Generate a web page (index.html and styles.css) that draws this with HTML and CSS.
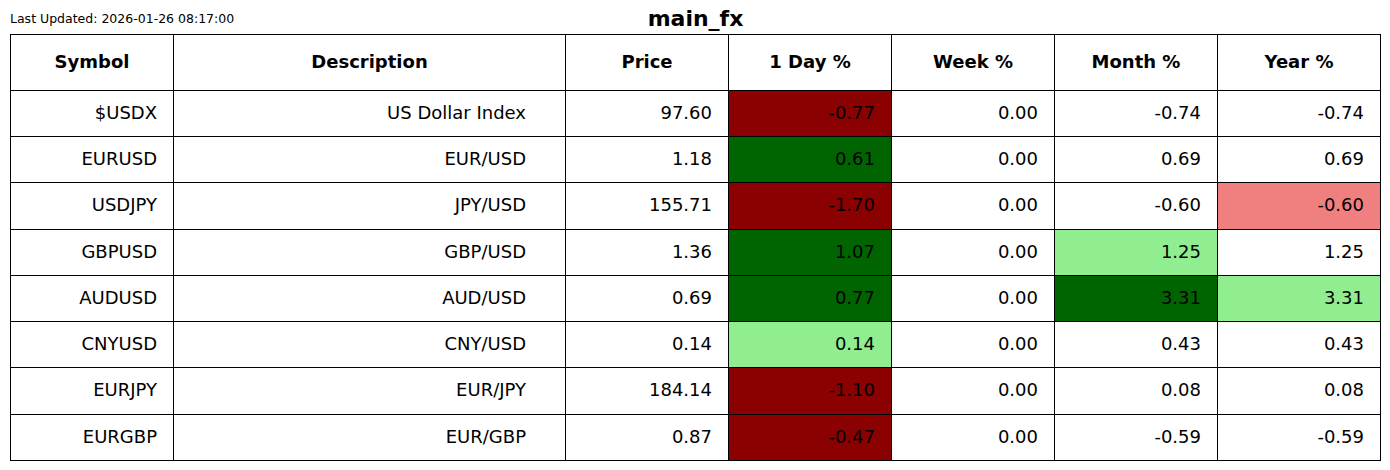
FILE: index.html
```html
<!DOCTYPE html>
<html>
<head>
<meta charset="utf-8">
<link rel="stylesheet" href="styles.css">
</head>
<body>
<div class="page">
  <div class="top">
    <div class="updated">Last Updated: 2026-01-26 08:17:00</div>
    <div class="title">main_fx</div>
    <div></div>
  </div>
  <table class="fx">
    <colgroup>
      <col class="c-narrow"><col class="c-wide"><col class="c-narrow"><col class="c-narrow"><col class="c-narrow"><col class="c-narrow"><col class="c-narrow">
    </colgroup>
    <thead>
      <tr><th>Symbol</th><th>Description</th><th>Price</th><th>1 Day %</th><th>Week %</th><th>Month %</th><th>Year %</th></tr>
    </thead>
    <tbody>
      <tr class="r46"><td>$USDX</td><td class="desc">US Dollar Index</td><td>97.60</td><td class="dred">-0.77</td><td>0.00</td><td>-0.74</td><td>-0.74</td></tr>
      <tr class="r46"><td>EURUSD</td><td class="desc">EUR/USD</td><td>1.18</td><td class="dgreen">0.61</td><td>0.00</td><td>0.69</td><td>0.69</td></tr>
      <tr class="r47"><td>USDJPY</td><td class="desc">JPY/USD</td><td>155.71</td><td class="dred">-1.70</td><td>0.00</td><td>-0.60</td><td class="lred">-0.60</td></tr>
      <tr class="r46"><td>GBPUSD</td><td class="desc">GBP/USD</td><td>1.36</td><td class="dgreen">1.07</td><td>0.00</td><td class="lgreen">1.25</td><td>1.25</td></tr>
      <tr class="r46"><td>AUDUSD</td><td class="desc">AUD/USD</td><td>0.69</td><td class="dgreen">0.77</td><td>0.00</td><td class="dgreen">3.31</td><td class="lgreen">3.31</td></tr>
      <tr class="r46"><td>CNYUSD</td><td class="desc">CNY/USD</td><td>0.14</td><td class="lgreen">0.14</td><td>0.00</td><td>0.43</td><td>0.43</td></tr>
      <tr class="r47"><td>EURJPY</td><td class="desc">EUR/JPY</td><td>184.14</td><td class="dred">-1.10</td><td>0.00</td><td>0.08</td><td>0.08</td></tr>
      <tr class="r46"><td>EURGBP</td><td class="desc">EUR/GBP</td><td>0.87</td><td class="dred">-0.47</td><td>0.00</td><td>-0.59</td><td>-0.59</td></tr>
    </tbody>
  </table>
</div>
</body>
</html>
```
FILE: styles.css
```css
html, body {
  margin: 0;
  padding: 0;
  background: #ffffff;
}
body {
  font-family: "DejaVu Sans", sans-serif;
  color: #000;
}
.page {
  padding: 0 9px 0 10px;
  width: 1371px;
}
.top {
  display: grid;
  grid-template-columns: 1fr auto 1fr;
  align-items: center;
  height: 34px;
}
.updated {
  font-size: 12.5px;
  line-height: 14px;
  margin-top: 4px;
}
.title {
  font-size: 22px;
  font-weight: bold;
  line-height: 26px;
  margin-top: 4px;
}
.fx {
  border-collapse: collapse;
  table-layout: fixed;
  width: 1371px;
  font-size: 18px;
}
.c-narrow { width: 163px; }
.c-wide { width: 392px; }
.fx th, .fx td {
  border: 1px solid #000;
  padding: 0 16px 2px;
  line-height: 20px;
  white-space: nowrap;
}
.fx th {
  height: 53px;
  text-align: center;
  font-weight: bold;
}
.fx td {
  text-align: right;
}
.fx td.desc {
  padding-right: 39px;
}
.r46 td { height: 43px; }
.r47 td { height: 44px; }
.dred { background: #8b0000; }
.dgreen { background: #006400; }
.lgreen { background: #90ee90; }
.lred { background: #f08080; }
```
